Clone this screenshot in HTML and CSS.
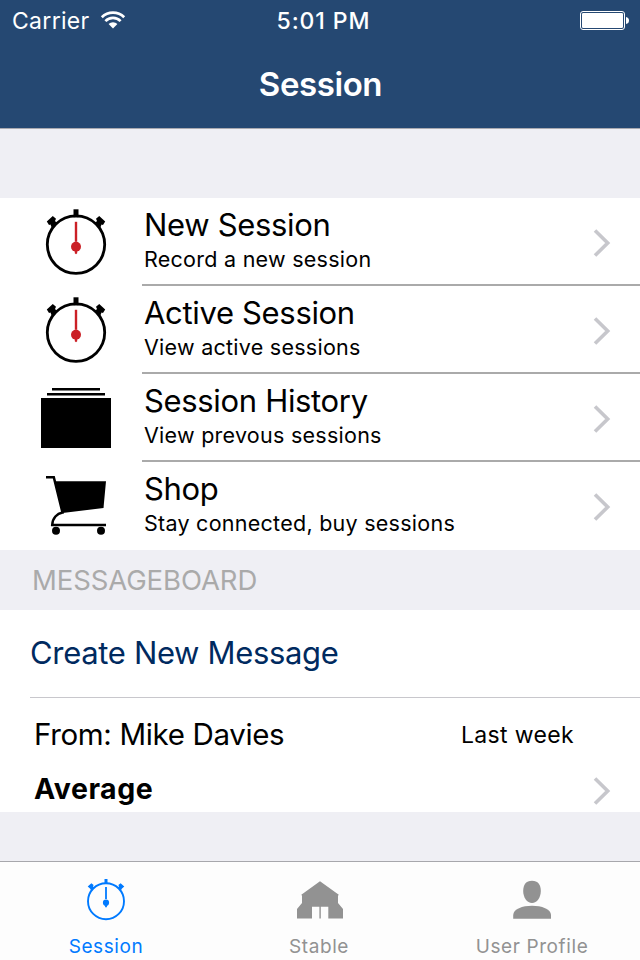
FILE: index.html
```html
<!DOCTYPE html>
<html lang="en">
<head>
    <meta charset="UTF-8">
    <meta name="viewport" content="width=device-width, initial-scale=1.0">
    <title>Session</title>
    <link rel="stylesheet" href="styles.css">
</head>
<body>
    <!-- Shared icons -->
    <svg class="defs" width="0" height="0">
        <symbol id="chevron" viewBox="0 0 18 28">
            <path d="M2 1.5 L14.7 14 L2 26.5" fill="none" stroke="#c7c7cc" stroke-width="3.6"/>
        </symbol>
        <symbol id="stopwatch" viewBox="0 0 72 72">
            <circle cx="36" cy="38.6" r="28.7" fill="none" stroke="currentColor" stroke-width="2.8"/>
            <path d="M33.5 3.3h5v8h-5z" fill="currentColor"/>
            <path d="M6.8 15.5 L12.8 10 L16 12.8 L15 15 L17.5 17.5 L12 22.5 L10.5 18.5 L9 19z" fill="currentColor"/>
            <path d="M65.2 15.5 L59.2 10 L56 12.8 L57 15 L54.5 17.5 L60 22.5 L61.5 18.5 L63 19z" fill="currentColor"/>
            <path class="hand" d="M34.8 15.8h2.4v20h-2.4z"/>
            <circle class="hand" cx="36" cy="40.8" r="5"/>
            <path class="hand" d="M34.8 45h2.4v2.2l-1.2 1l-1.2-1z"/>
        </symbol>
    </svg>

    <div class="app">
        <header>
            <div class="status-bar">
                <div class="carrier">
                    <span>Carrier</span>
                    <svg class="wifi" width="26" height="20" viewBox="0 0 26 20">
                        <g fill="none" stroke="#fff" stroke-width="2.7">
                            <path d="M1.8 7.2 A16 16 0 0 1 24.2 7.2"/>
                            <path d="M5.4 11.1 A10.7 10.7 0 0 1 20.6 11.1"/>
                        </g>
                        <path d="M8.6 14 A6.2 6.2 0 0 1 17.4 14 L13 18.6z" fill="#fff"/>
                    </svg>
                </div>
                <span class="time">5:01 PM</span>
                <svg class="battery" width="50" height="20" viewBox="0 0 50 20">
                    <rect x="0.5" y="0.5" width="44" height="18" rx="2.5" fill="none" stroke="#fff"/>
                    <rect x="2" y="2" width="41" height="15" rx="1.2" fill="#fff"/>
                    <path d="M46 6 Q49 6.5 49 9.5 Q49 12.5 46 13z" fill="#fff"/>
                </svg>
            </div>
            <h1>Session</h1>
        </header>

        <main>
            <ul class="menu">
                <li class="menu-item">
                    <svg class="menu-icon" width="72" height="72"><use href="#stopwatch"/></svg>
                    <div class="menu-text">
                        <h2>New Session</h2>
                        <p>Record a new session</p>
                        <svg class="chevron" width="18" height="28"><use href="#chevron"/></svg>
                    </div>
                </li>
                <li class="menu-item">
                    <svg class="menu-icon" width="72" height="72"><use href="#stopwatch"/></svg>
                    <div class="menu-text">
                        <h2>Active Session</h2>
                        <p>View active sessions</p>
                        <svg class="chevron" width="18" height="28"><use href="#chevron"/></svg>
                    </div>
                </li>
                <li class="menu-item">
                    <svg class="menu-icon" width="72" height="72" viewBox="0 0 72 72">
                        <path d="M12 6h48v2.5h-48zM7 11h58v2.5h-58zM1 16h70v50h-70z"/>
                    </svg>
                    <div class="menu-text">
                        <h2>Session History</h2>
                        <p>View prevous sessions</p>
                        <svg class="chevron" width="18" height="28"><use href="#chevron"/></svg>
                    </div>
                </li>
                <li class="menu-item">
                    <svg class="menu-icon" width="72" height="72" viewBox="0 0 72 72">
                        <path d="M15 11.2 H66 L63.5 38 L22.5 43z"/>
                        <path d="M6 7.3 H13.8 L22.5 42.5 C17 43.5 12.5 48 12.2 55 H66" fill="none" stroke="#000" stroke-width="2.5"/>
                        <circle cx="16" cy="60.8" r="4"/>
                        <circle cx="61" cy="60.8" r="4"/>
                    </svg>
                    <div class="menu-text">
                        <h2>Shop</h2>
                        <p>Stay connected, buy sessions</p>
                        <svg class="chevron" width="18" height="28"><use href="#chevron"/></svg>
                    </div>
                </li>
            </ul>

            <h3 class="section-title">MESSAGEBOARD</h3>

            <div class="board">
                <div class="create">Create New Message</div>
                <div class="message">
                    <div class="message-top">
                        <span class="from">From: Mike Davies</span>
                        <span class="date">Last week</span>
                    </div>
                    <div class="message-bottom">
                        <strong>Average</strong>
                        <svg width="18" height="28"><use href="#chevron"/></svg>
                    </div>
                </div>
            </div>
        </main>

        <nav>
            <div class="tab active">
                <svg width="48" height="48" viewBox="0 0 48 48">
                    <g fill="currentColor">
                        <circle cx="24" cy="26.2" r="18" fill="none" stroke="currentColor" stroke-width="1.9"/>
                        <path d="M22.5 4h3v4.5h-3z"/>
                        <path d="M5.7 11.6 L9.4 8.3 L11.6 10 L11 11.5 L12.2 12.6 L9.2 15.4 L8 13.4z"/>
                        <path d="M42.3 11.6 L38.6 8.3 L36.4 10 L37 11.5 L35.8 12.6 L38.8 15.4 L40 13.4z"/>
                        <path d="M23.1 12h1.8v12h-1.8z"/>
                        <circle cx="24" cy="27.7" r="3.1"/>
                        <path d="M23.1 30h1.8v2.3h-1.8z"/>
                    </g>
                </svg>
                <span>Session</span>
            </div>
            <div class="tab">
                <svg width="48" height="48" viewBox="0 0 48 48">
                    <path fill="currentColor" d="M25 6.3 L43.8 19.8 L43 20.7 V28 L48 34 V43.5 H33.3 V31.7 H25.8 V43.5 H24.4 V31.7 H17 V43.5 H2 V34 L7 28 V20.7 L6.3 19.8z"/>
                </svg>
                <span>Stable</span>
            </div>
            <div class="tab">
                <svg width="48" height="48" viewBox="0 0 48 48">
                    <g fill="currentColor">
                        <path d="M24 5.7 C30 5.7 32.8 9.5 32.8 16 C32.8 22.5 29 28 24 28 C19 28 15.2 22.5 15.2 16 C15.2 9.5 18 5.7 24 5.7z"/>
                        <path d="M5.2 43.7 V40 C5.2 34 14.5 30.7 24 30.7 C33.5 30.7 43 34 43 40 V43.7z"/>
                    </g>
                </svg>
                <span>User Profile</span>
            </div>
        </nav>
    </div>
</body>
</html>
```

FILE: styles.css
```css
* {
    box-sizing: border-box;
}
body {
    font-family: Inter, "Liberation Sans", sans-serif;
    margin: 0;
    background-color: #efeff4;
    color: #000;
}
h1, h2, h3, p, ul {
    margin: 0;
    padding: 0;
    font-weight: 400;
}
svg {
    display: block;
    flex-shrink: 0;
}
span, h1, h2, p, strong {
    white-space: nowrap;
}
.defs {
    position: absolute;
}
.app {
    width: 640px;
    height: 960px;
    display: flex;
    flex-direction: column;
    overflow: hidden;
}

/* Header */
header {
    height: 129px;
    background-color: #254872;
    border-bottom: 1px solid #a9a9b0;
    color: #fff;
}
.status-bar {
    display: grid;
    grid-template-columns: 1fr auto 1fr;
    height: 40px;
    padding: 0 10px 0 12px;
    font-size: 23px;
    line-height: 42px;
}
.carrier {
    display: flex;
    gap: 10px;
    letter-spacing: 0.3px;
}
.wifi {
    margin-top: 10px;
}
.time {
    padding-left: 5px;
    font-weight: 500;
    letter-spacing: 0.9px;
}
.battery {
    justify-self: end;
    margin-top: 11px;
}
h1 {
    padding-left: 1px;
    font-size: 33px;
    font-weight: 600;
    letter-spacing: -0.4px;
    line-height: 88px;
    text-align: center;
}

/* Menu */
main {
    flex: 1;
    padding-top: 69px;
}
.menu {
    list-style: none;
    background-color: #fff;
}
.menu-item {
    display: flex;
    height: 88px;
    padding-left: 40px;
}
.menu-icon {
    margin-top: 8px;
}
.hand {
    fill: #cb2026;
}
.menu-text {
    flex: 1;
    display: grid;
    grid-template-columns: 1fr auto;
    grid-template-rows: 40px 28px;
    align-content: start;
    margin-left: 30px;
    padding: 7px 29px 0 2px;
    border-bottom: 2px solid #aaa;
}
.menu-item:last-child .menu-text {
    border-bottom: none;
}
.menu-text h2 {
    font-size: 31px;
    letter-spacing: -0.33px;
    line-height: 40px;
}
.menu-text p {
    grid-column: 1;
    font-size: 21.5px;
    line-height: 28px;
    letter-spacing: 0.26px;
}
.chevron {
    grid-column: 2;
    grid-row: 1 / 3;
    margin-top: 24px;
}

/* Messageboard */
.section-title {
    height: 60px;
    padding-left: 32px;
    color: #aaa;
    font-size: 27.5px;
    letter-spacing: -0.1px;
    line-height: 60px;
}
.board {
    background-color: #fff;
}
.create {
    height: 88px;
    margin-left: 30px;
    border-bottom: 1px solid #c8c7cc;
    color: #002a5f;
    font-size: 31px;
    letter-spacing: -0.33px;
    line-height: 86px;
}
.message {
    height: 114px;
    padding: 14px 29px 0 34px;
}
.message-top,
.message-bottom {
    display: flex;
    justify-content: space-between;
}
.message-top {
    height: 52px;
    padding-right: 37px;
    line-height: 46px;
}
.from {
    font-size: 29.5px;
    letter-spacing: -0.35px;
    line-height: 44px;
}
.date {
    font-size: 23px;
    letter-spacing: 0.35px;
}
.message-bottom {
    font-size: 28.5px;
    letter-spacing: 0.5px;
    line-height: 50px;
}
.message-bottom svg {
    margin-top: 13px;
}

/* Tab bar */
nav {
    display: grid;
    grid-template-columns: 212px 1fr 212px;
    height: 99px;
    padding-right: 2px;
    background-color: #fdfdfd;
    border-top: 1px solid #a7a7ac;
}
.tab {
    display: flex;
    flex-direction: column;
    align-items: center;
    padding-top: 13px;
    color: #929292;
    font-size: 19px;
    letter-spacing: 0.6px;
    line-height: 48px;
}
.tab.active {
    color: #007aff;
}
```
